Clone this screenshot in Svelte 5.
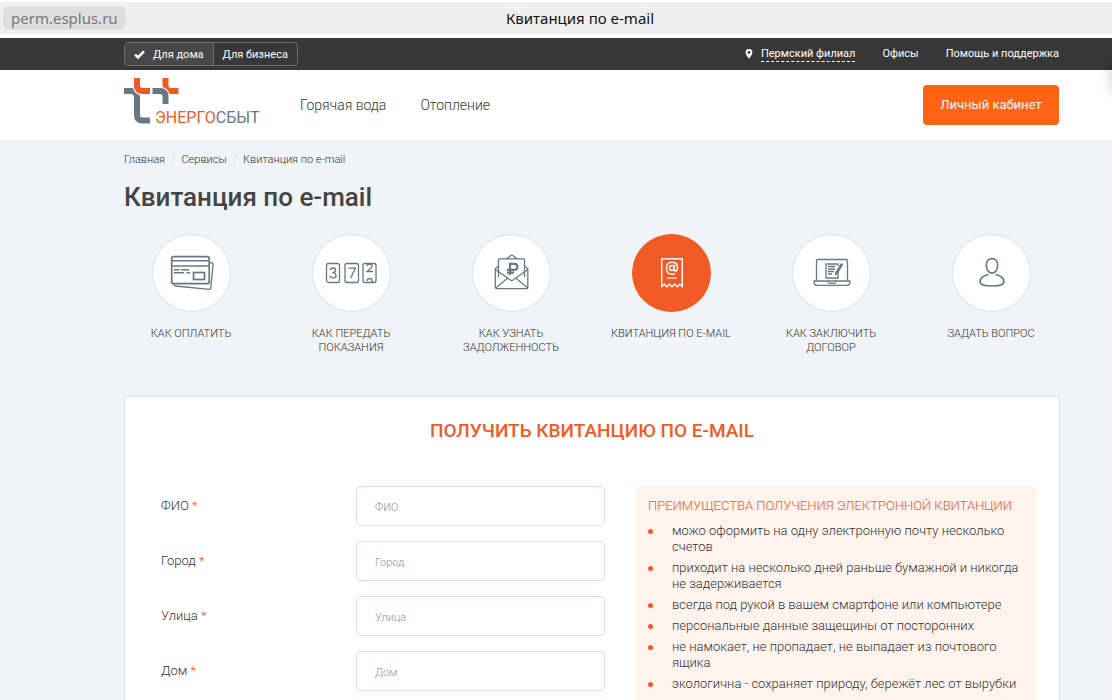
<script>
  const sections = ['Горячая вода', 'Отопление'];

  const services = [
    { icon: 'card', title: 'Как оплатить' },
    { icon: 'meter', title: 'Как передать показания' },
    { icon: 'letter', title: 'Как узнать задолженность' },
    { icon: 'receipt', title: 'Квитанция по e-mail', active: true },
    { icon: 'laptop', title: 'Как заключить договор' },
    { icon: 'user', title: 'Задать вопрос' }
  ];

  const fields = [
    { id: 'fio', label: 'ФИО' },
    { id: 'city', label: 'Город' },
    { id: 'street', label: 'Улица' },
    { id: 'house', label: 'Дом' }
  ];

  const benefits = [
    'можо оформить на одну электронную почту несколько счетов',
    'приходит на несколько дней раньше бумажной и никогда не задерживается',
    'всегда под рукой в вашем смартфоне или компьютере',
    'персональные данные защещины от посторонних',
    'не намокает, не пропадает, не выпадает из почтового ящика',
    'экологична - сохраняет природу, бережёт лес от вырубки'
  ];

  let audience = $state('home');
  let values = $state({ fio: '', city: '', street: '', house: '' });
</script>

<div class="page">
  <div class="browser">
    <span class="host">perm.esplus.ru</span>
    <span class="tab-title">Квитанция по e-mail</span>
    <span></span>
  </div>

  <div class="topbar wrap">
    <div class="switch">
      <button class:on={audience === 'home'} onclick={() => (audience = 'home')}>
        {#if audience === 'home'}
          <svg width="11" height="9" viewBox="0 0 11 9"><path d="M1 4.600 4 7.400 10 1.400" fill="none" stroke="#fff" stroke-width="2.600" /></svg>
        {/if}
        Для дома
      </button>
      <button class:on={audience === 'business'} onclick={() => (audience = 'business')}>
        {#if audience === 'business'}
          <svg width="11" height="9" viewBox="0 0 11 9"><path d="M1 4.600 4 7.400 10 1.400" fill="none" stroke="#fff" stroke-width="2.600" /></svg>
        {/if}
        Для бизнеса
      </button>
    </div>
    <nav class="links">
      <a href="#branch" class="branch">
        <svg width="8" height="10" viewBox="0 0 8 10"><path fill="#fff" fill-rule="evenodd" d="M4 0a3.400 3.400 0 0 1 3.400 3.400C7.400 5.600 5.200 7.400 4 10 2.800 7.400.6 5.600.6 3.400A3.400 3.400 0 0 1 4 0zm0 2a1.400 1.400 0 1 0 0 2.800A1.400 1.400 0 0 0 4 2z" /></svg>
        <span>Пермский филиал</span>
      </a>
      <a href="#offices">Офисы</a>
      <a href="#help">Помощь и поддержка</a>
    </nav>
  </div>

  <header class="wrap">
    <a href="#main" class="logo" aria-label="Энергосбыт">
      <svg width="140" height="48" viewBox="0 0 140 48">
        <g fill="none" stroke-width="6">
          <path stroke="#687783" d="M0 13h7.500q5.500.5 5.500 6v18q0 5.500 5.500 5.500H26" />
          <path stroke="#fff" stroke-width="8" d="M13 5v2.500q0 5.500 5.500 5.500H25" />
          <path stroke="#f15a24" d="M13 0v7.500q0 5.500 5.500 5.500H26" />
          <path stroke="#f15a24" d="M41.500 0v7.500q0 5.500 5.500 5.500h7.500" />
          <path stroke="#fff" stroke-width="8" d="M31 13h5q5.500 0 5.500 5.500V22" />
          <path stroke="#687783" d="M28.500 13H36q5.500 0 5.500 5.500V26" />
        </g>
        <text x="31" y="45" class="logo-text"><tspan fill="#f15a24">ЭНЕРГО</tspan><tspan fill="#687783">СБЫТ</tspan></text>
      </svg>
    </a>
    <nav class="sections">
      {#each sections as s}
        <a href="#section">{s}</a>
      {/each}
    </nav>
    <button class="account">Личный кабинет</button>
  </header>

  <main class="wrap">
    <nav class="crumbs">
      <a href="#main">Главная</a><i>/</i><a href="#services">Сервисы</a><i>/</i><span>Квитанция по e-mail</span>
    </nav>
    <h1>Квитанция по e-mail</h1>

    <div class="services">
      {#each services as s}
        <a href="#service" class:active={s.active}>
          <span class="circle">
            <svg width="55" height="44" viewBox="-1 0 55 44" fill="none" stroke="#687783" stroke-width="1.300">
              {#if s.icon === 'card'}
                <rect x="6.700" y="5.700" width="37.500" height="27" rx="2" stroke-width="1.700" />
                <path d="M6.500 9.800h37.500M6.500 15h37.500" stroke-width="1.500" />
                <path d="M9 18.800h5.500M16 18.800h8M9 21.800h10M21.500 21.800H25" stroke-width="1.500" />
                <rect x="28.500" y="21.500" width="11" height="7" stroke-width="1.700" />
                <path d="M44.500 11.500l2.700.4q1 .2.900 1.300l-2.400 24q-.2 1.200-1.400 1.100L10.500 35q-1.500-.2-1.800-2" />
              {:else if s.icon === 'meter'}
                <rect x="1.500" y="12.500" width="13" height="19" rx="2" />
                <rect x="20" y="12.500" width="13.500" height="19" rx="2" />
                <rect x="38" y="12.500" width="13" height="19" rx="2" />
                <path d="M5.200 19q.5-2 2.800-2 2.600 0 2.600 2.300 0 2.200-3.300 2.400 3.700.2 3.700 2.700 0 2.500-3 2.500-2.500 0-3-2.200" />
                <path d="M23.500 17.200h6.700L25.800 27" />
                <path d="M42 15.200q.4-2.200 2.700-2.200 2.500 0 2.500 2.100 0 1.500-5.200 5.400h6M42 29.800q.4-2.300 2.700-2.300t2.500 2.200q0 1-.8 1.800" />
              {:else if s.icon === 'letter'}
                <path d="M13.500 26V8.700q0-.9.900-.9h24.200q.9 0 .9.900V26M22 7.500l4-3q.9-.6 1.800 0l4 3" />
                <path d="M13.500 15l-3.200 2.700v18.500q0 1.400 1.400 1.400h29.700q1.400 0 1.400-1.400V17.700L39.500 15" />
                <path d="M10.500 18.500L25.300 29q1.400.9 2.800 0l14.700-10.500M11 36.800l11.500-9.500M42.500 36.800L31 27.300" />
                <path stroke-width="2.200" d="M25 24V12.900h4.200q3.200 0 3.200 3t-3.200 3H22M22 21.700h7" />
              {:else if s.icon === 'receipt'}
                <g stroke="#fff">
                  <path stroke-width="1.400" d="M16.700 35.500V7.700h20.600v27.800l-2.500-2.300-2.600 2.600-2.600-2.600-2.600 2.600-2.600-2.600-2.600 2.600-2.600-2.600z" />
                  <path d="M22 27h10" />
                  <circle cx="27" cy="17" r="2.500" stroke-width="1.400" />
                  <path stroke-width="1.400" d="M29.700 13.800l-.5 4.700q0 1.500 1.300 1.500 2 0 2-3.500 0-5.300-5.300-5.300-5.700 0-5.700 6t5.600 6q1.700 0 3-.6" />
                </g>
              {:else if s.icon === 'laptop'}
                <path d="M11.500 30V10.200q0-1.700 1.700-1.700h27.600q1.700 0 1.700 1.700V30" />
                <path d="M9.200 30h35.600v1.500q0 2.800-2.800 2.800H12q-2.800 0-2.800-2.800zM23 30.500q.3 1.800 1.500 1.800h5q1.200 0 1.500-1.800" />
                <path d="M33 20v7H21V13h12v2M23 15.500h7M23 18h7M23 20.500h6M23 23h4" />
                <path d="M36.200 12.500l1.600 1-5.500 9-2 1.400.4-2.400z" fill="#687783" stroke-width="1" />
              {:else}
                <path stroke-width="1.700" d="M27 7.700c3.600 0 5.700 3 5.700 6.500 0 4-2.200 8-5.700 8s-5.700-4-5.700-8c0-3.500 2.100-6.500 5.700-6.500z" />
                <path stroke-width="1.700" d="M23.500 23.500c-5 1-8.500 2.500-8.500 7.500 0 2.500 5.500 4 12 4s12-1.500 12-4c0-5-3.500-6.500-8.500-7.500" />
              {/if}
            </svg>
          </span>
          <span class="name">{s.title}</span>
        </a>
      {/each}
    </div>

    <section class="card">
      <h2>Получить квитанцию по e-mail</h2>
      <div class="columns">
        <form>
          {#each fields as f}
            <label for={f.id}>{f.label} <b>*</b></label>
            <input id={f.id} type="text" placeholder={f.label} bind:value={values[f.id]} />
          {/each}
        </form>
        <aside>
          <h3>Преимущества получения электронной квитанции</h3>
          <ul>
            {#each benefits as b}
              <li>{b}</li>
            {/each}
          </ul>
        </aside>
      </div>
    </section>
  </main>

  <div class="drawer"></div>
</div>

<style>
  :global(body) {
    background: #f0f4f7;
  }

  .page {
    position: relative;
    display: flex;
    flex-direction: column;
    height: 100vh;
    overflow: hidden;
    font-family: Roboto, 'Liberation Sans', sans-serif;
    font-weight: 300;
    color: #333;
  }

  .page > * {
    flex-shrink: 0;
  }

  a {
    color: inherit;
    text-decoration: none;
  }

  button,
  input {
    font-family: inherit;
    box-sizing: border-box;
  }

  button {
    cursor: pointer;
  }

  .wrap {
    padding-left: 124px;
    padding-right: 52px;
  }

  .browser {
    display: grid;
    grid-template-columns: 1fr auto 1fr;
    align-items: center;
    height: 32px;
    border-top: 2px solid #fff;
    border-bottom: 4px solid #fff;
    background: #efefef;
    font-family: 'Noto Sans', sans-serif;
    font-weight: 400;
    color: #111;
  }

  .host {
    justify-self: start;
    margin-left: 3px;
    padding: 0 8px;
    border-radius: 6px;
    background: #dedede;
    color: #777;
    font-size: 15px;
    line-height: 24px;
  }

  .tab-title {
    padding-left: 48px;
    font-size: 15px;
  }

  .topbar {
    display: flex;
    align-items: center;
    justify-content: space-between;
    height: 32px;
    background: #383838;
    color: #fff;
    font-size: 11px;
    font-weight: 400;
  }

  .switch {
    display: flex;
    border: 1px solid #6d6d6d;
    border-radius: 4px;
    overflow: hidden;
  }

  .switch button {
    display: flex;
    align-items: center;
    gap: 8px;
    height: 22px;
    padding: 0 9px;
    border: 0;
    background: transparent;
    color: #fff;
    font-size: 11px;
  }

  .switch button + button {
    border-left: 1px solid #6d6d6d;
  }

  .switch .on {
    background: #484848;
  }

  .links {
    display: flex;
    gap: 27px;
    padding-right: 1px;
    line-height: 14px;
  }

  .branch {
    display: flex;
    align-items: center;
    gap: 8px;
  }

  .branch span {
    border-bottom: 1px dashed #fff;
  }

  header {
    display: flex;
    align-items: center;
    height: 70px;
    background: #fff;
  }

  .logo {
    display: flex;
    width: 176px;
    padding-bottom: 6px;
  }

  .logo-text {
    font-size: 16px;
    font-weight: 400;
  }

  .sections {
    display: flex;
    flex: 1;
    gap: 34px;
    font-size: 14px;
  }

  .account {
    width: 136px;
    height: 40px;
    margin-right: 1px;
    padding-bottom: 2px;
    border: 0;
    border-radius: 4px;
    background: #ff6314;
    color: #fff;
    font-size: 13px;
    font-weight: 400;
  }

  main {
    padding-top: 13px;
    background: #f0f4f7;
  }

  .crumbs {
    display: flex;
    font-size: 11px;
    line-height: 14px;
  }

  .crumbs i {
    margin: 0 6px;
    color: #c4ccd3;
    font-style: normal;
  }

  h1 {
    margin: 13px 0 20px;
    color: #444;
    font-size: 26px;
    font-weight: 500;
    line-height: 34px;
  }

  .services {
    display: grid;
    grid-template-columns: repeat(6, 1fr);
    margin: 0 -11px 41px -13px;
  }

  .services a {
    display: flex;
    flex-direction: column;
    align-items: center;
    text-align: center;
  }

  .circle {
    display: flex;
    align-items: center;
    justify-content: center;
    box-sizing: border-box;
    width: 79px;
    height: 78px;
    border: 1px solid #dce3ea;
    border-radius: 50%;
    background: #fff;
  }

  .active .circle {
    border-color: #f15a24;
    background: #f15a24;
  }

  .name {
    max-width: 130px;
    margin-top: 15px;
    font-size: 11px;
    line-height: 14px;
    text-transform: uppercase;
  }

  .card {
    padding: 21px 23px 40px 36px;
    border: 1px solid #dce3ea;
    background: #fff;
  }

  h2 {
    margin: 0 0 42px;
    padding-right: 13px;
    color: #f15a24;
    font-size: 19px;
    font-weight: 500;
    line-height: 26px;
    text-align: center;
    text-transform: uppercase;
  }

  .columns {
    display: grid;
    grid-template-columns: 444px 1fr;
    align-items: start;
    gap: 31px;
  }

  form {
    display: grid;
    grid-template-columns: 195px 1fr;
    row-gap: 15px;
  }

  label {
    padding-top: 11px;
    font-size: 13px;
    line-height: 18px;
  }

  label b {
    color: #f15a24;
    font-weight: 300;
  }

  input {
    width: 100%;
    height: 40px;
    padding: 2px 18px 0;
    border: 1px solid #d6dfe7;
    border-radius: 4px;
    outline: none;
    background: #fff;
    color: #333;
    font-size: 11px;
    font-weight: 300;
  }

  input::placeholder {
    color: #8a94a0;
  }

  aside {
    padding: 11px 12px;
    border-radius: 4px;
    background: #fff3ee;
  }

  h3 {
    margin: 0 0 8px;
    color: #f15a24;
    font-size: 13px;
    font-weight: 300;
    line-height: 18px;
    text-transform: uppercase;
  }

  ul {
    margin: 0;
    padding: 0;
    list-style: none;
  }

  li {
    display: flex;
    margin-bottom: 5px;
    font-size: 13px;
    line-height: 16px;
  }

  li::before {
    content: '';
    flex-shrink: 0;
    width: 5px;
    height: 5px;
    margin: 6px 19px 0 0;
    border-radius: 50%;
    background: #f15a24;
  }

  /* closed drawer, only its shadow shows at the window edge */
  .drawer {
    position: absolute;
    top: 58px;
    left: 100%;
    width: 40px;
    height: 36px;
    box-shadow: 0 0 14px rgba(0, 0, 0, 0.2);
  }
</style>
